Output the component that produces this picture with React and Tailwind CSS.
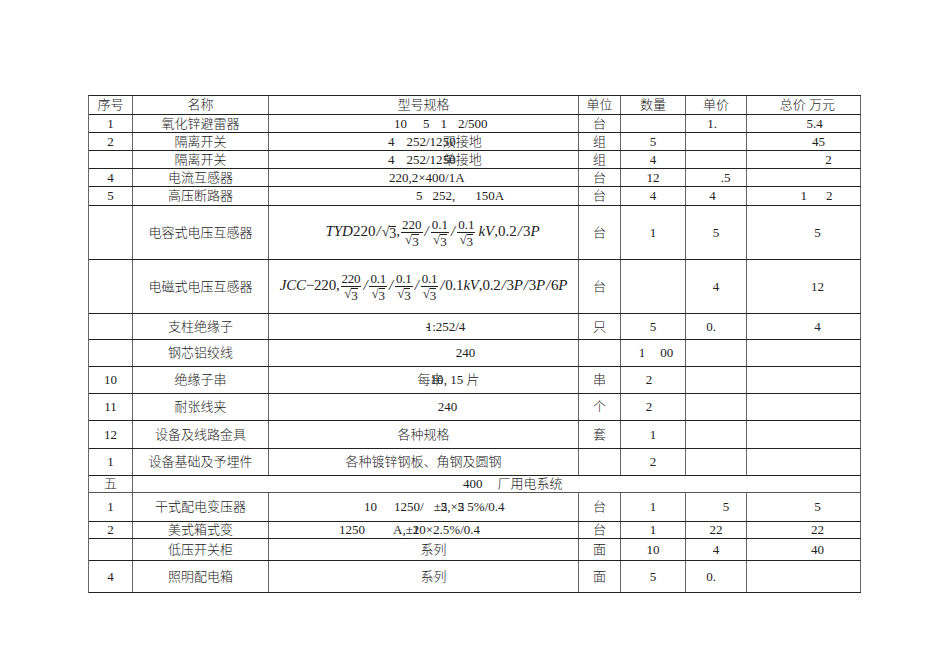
import React from "react";

const W = ["w-[44px]", "w-[136px]", "w-[310px]", "w-[42px]", "w-[65px]", "w-[61px]", "w-[114px]"];
const DEF = ["justify-center", "justify-center", "justify-center", "justify-center", "justify-center", "justify-center", "justify-center pl-[28px]"];

const Ov = ({ base, over }) => (
  <span className="relative inline-block">
    {base}
    <span className="absolute left-0 top-0">{over}</span>
  </span>
);

const Sq = () => (
  <span className="inline-flex items-start">
    <span className="leading-[14px]">√</span>
    <span className="border-t border-[#222] leading-[13px] mt-[1px]">3</span>
  </span>
);

const Frac = ({ n }) => (
  <span className="inline-flex flex-col items-center align-middle mx-[1px] text-[13px] leading-[14px] not-italic">
    <span className="px-[1px]">{n}</span>
    <span className="border-t border-[#222] w-full flex justify-center px-[1px]">
      <Sq />
    </span>
  </span>
);

const Sl = () => <i className="mx-[1px]">/</i>;

function Row({ h, cells }) {
  return (
    <div className={`flex border-b border-[#222] ${h}`}>
      {cells.map((c, i) => {
        const o = c && typeof c === "object" && !React.isValidElement(c) && "c" in c ? c : { c };
        return (
          <div
            key={i}
            className={`${W[i]} shrink-0 border-r border-[#666] flex items-center whitespace-pre ${o.a || DEF[i]}`}
          >
            {o.c}
          </div>
        );
      })}
    </div>
  );
}

export default function App() {
  return (
    <div className="w-[950px] h-[672px] bg-white font-['Liberation_Serif','Noto_Sans_CJK_SC',serif] font-light text-[13px] text-[#222] pt-[95px] pl-[88px]">
      <div className="w-[773px] border-t border-l border-t-[#222] border-l-[#666]">
        <Row h="h-[19px]" cells={["序号", "名称", "型号规格", "单位", "数量", "单价", { c: "总价 万元", a: "justify-center pl-[8px]" }]} />
        <Row
          h="h-[18px]"
          cells={[
            "1",
            "氧化锌避雷器",
            {
              c: (
                <>
                  10<span className="ml-[16px]">5</span>
                  <span className="ml-[11px]">1</span>
                  <span className="ml-[11px]">2/500</span>
                </>
              ),
              a: "justify-start pl-[125px]",
            },
            "台",
            "",
            { c: "1.", a: "justify-center pr-[8px]" },
            { c: "5.4", a: "justify-center pl-[22px]" },
          ]}
        />
        <Row
          h="h-[18px]"
          cells={[
            "2",
            "隔离开关",
            {
              c: (
                <>
                  4<span className="ml-[12px]">252/12</span>
                  <Ov base="双" over="50" />
                  接地
                </>
              ),
              a: "justify-start pl-[119px]",
            },
            "组",
            "5",
            "",
            { c: "45", a: "justify-center pl-[30px]" },
          ]}
        />
        <Row
          h="h-[18px]"
          cells={[
            "",
            "隔离开关",
            {
              c: (
                <>
                  4<span className="ml-[12px]">252/12</span>
                  <Ov base="单" over="50" />
                  接地
                </>
              ),
              a: "justify-start pl-[119px]",
            },
            "组",
            "4",
            "",
            { c: "2", a: "justify-center pl-[50px]" },
          ]}
        />
        <Row
          h="h-[18px]"
          cells={[
            "4",
            "电流互感器",
            { c: "220,2×400/1A", a: "justify-start pl-[120px]" },
            "台",
            "12",
            { c: ".5", a: "justify-center pl-[19px]" },
            "",
          ]}
        />
        <Row
          h="h-[19px]"
          cells={[
            "5",
            "高压断路器",
            {
              c: (
                <>
                  5<span className="ml-[10px]">252,</span>
                  <span className="ml-[20px]">150A</span>
                </>
              ),
              a: "justify-start pl-[147px]",
            },
            "台",
            "4",
            { c: "4", a: "justify-center pr-[7px]" },
            {
              c: (
                <>
                  1<span className="ml-[19px]">2</span>
                </>
              ),
              a: "justify-center pl-[26px]",
            },
          ]}
        />
        <Row
          h="h-[54px]"
          cells={[
            "",
            "电容式电压互感器",
            {
              c: (
                <span className="text-[15px] font-normal font-['Liberation_Serif',serif]">
                  <i>TYD</i>220<Sl />
                  <span className="align-middle inline-flex text-[14px]">
                    <Sq />
                  </span>
                  ,
                  <Frac n="220" />
                  <Sl />
                  <Frac n="0.1" />
                  <Sl />
                  <Frac n="0.1" />
                  <i className="ml-[2px]">kV</i>,0.2<Sl />3<i>P</i>
                </span>
              ),
              a: "justify-center pl-[18px]",
            },
            "台",
            "1",
            "5",
            "5",
          ]}
        />
        <Row
          h="h-[54px]"
          cells={[
            "",
            "电磁式电压互感器",
            {
              c: (
                <span className="text-[15px] font-normal font-['Liberation_Serif',serif] tracking-[-0.2px]">
                  <i>JCC</i>−220,
                  <Frac n="220" />
                  <Sl />
                  <Frac n="0.1" />
                  <Sl />
                  <Frac n="0.1" />
                  <Sl />
                  <Frac n="0.1" />
                  <Sl />
                  0.1<i>kV</i>,0.2<Sl />3<i>P</i>
                  <Sl />3<i>P</i>
                  <Sl />6<i>P</i>
                </span>
              ),
              a: "justify-center",
            },
            "台",
            "",
            "4",
            "12",
          ]}
        />
        <Row
          h="h-[26px]"
          cells={[
            "",
            "支柱绝缘子",
            {
              c: (
                <>
                  <Ov base="1" over="-" />
                  :252/4
                </>
              ),
              a: "justify-center pl-[44px]",
            },
            "只",
            "5",
            { c: "0.", a: "justify-center pr-[10px]" },
            "4",
          ]}
        />
        <Row
          h="h-[27px]"
          cells={[
            "",
            "钢芯铝绞线",
            { c: "240", a: "justify-center pl-[84px]" },
            "",
            {
              c: (
                <>
                  1<span className="ml-[15px]">00</span>
                </>
              ),
              a: "justify-center pl-[6px]",
            },
            "",
            "",
          ]}
        />
        <Row
          h="h-[27px]"
          cells={[
            "10",
            "绝缘子串",
            {
              c: (
                <>
                  每<Ov base="串" over="10" />
                  , 15 片
                </>
              ),
              a: "justify-center pl-[50px]",
            },
            "串",
            { c: "2", a: "justify-center pr-[8px]" },
            "",
            "",
          ]}
        />
        <Row
          h="h-[27px]"
          cells={[
            "11",
            "耐张线夹",
            { c: "240", a: "justify-center pl-[48px]" },
            "个",
            { c: "2", a: "justify-center pr-[8px]" },
            "",
            "",
          ]}
        />
        <Row h="h-[28px]" cells={["12", "设备及线路金具", "各种规格", "套", "1", "", ""]} />
        <Row h="h-[27px]" cells={["1", "设备基础及予埋件", "各种镀锌钢板、角钢及圆钢", "", "2", "", ""]} />
        <div className="flex border-b border-[#555] h-[17px]">
          <div className="w-[44px] shrink-0 border-r border-[#666] flex items-center justify-center">五</div>
          <div className="w-[728px] shrink-0 border-r border-[#666] flex items-center whitespace-pre pl-[330px]">
            400<span className="ml-[15px]">厂用电系统</span>
          </div>
        </div>
        <Row
          h="h-[29px]"
          cells={[
            "1",
            "干式配电变压器",
            {
              c: (
                <>
                  10<span className="ml-[17px]">1250/</span>
                  <span className="ml-[10px]">±</span>
                  <Ov base="2," over="5" />
                  ×<Ov base="2" over="5" />
                  <span className="ml-[3px]">5%/0.4</span>
                </>
              ),
              a: "justify-start pl-[95px]",
            },
            "台",
            "1",
            { c: "5", a: "justify-center pl-[20px]" },
            "5",
          ]}
        />
        <Row
          h="h-[17px]"
          cells={[
            "2",
            "美式箱式变",
            {
              c: (
                <>
                  1250<span className="ml-[28px]">A,±</span>
                  <Ov base="10" over="2" />
                  ×2.5%/0.4
                </>
              ),
              a: "justify-start pl-[70px]",
            },
            "台",
            "1",
            "22",
            "22",
          ]}
        />
        <Row h="h-[22px]" cells={["", "低压开关柜", { c: "系列", a: "justify-center pl-[20px]" }, "面", "10", "4", "40"]} />
        <Row
          h="h-[32px]"
          cells={["4", "照明配电箱", { c: "系列", a: "justify-center pl-[20px]" }, "面", "5", { c: "0.", a: "justify-center pr-[10px]" }, ""]}
        />
      </div>
    </div>
  );
}
